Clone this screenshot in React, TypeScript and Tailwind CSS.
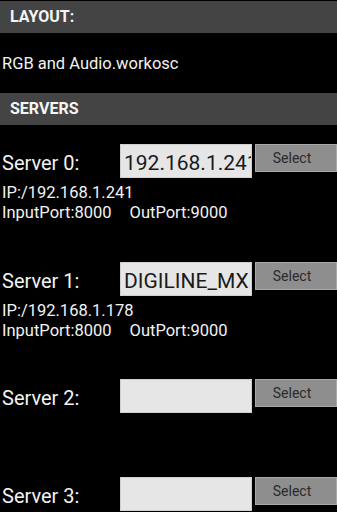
import React from "react";

const font = { fontFamily: "Roboto, 'Noto Sans', sans-serif" };

function Row({ label, value, info, gapAfter }: { label: string; value: string; info?: [string, string, string]; gapAfter: string }) {
  return (
    <div className={gapAfter}>
      <div className="flex items-start">
        <div className="w-[120px] h-[34px] flex items-center pl-[2px] pt-[4px] text-[20px] leading-[24px] text-[#f2f2f2]">
          {label}
        </div>
        <div className="w-[132px] h-[34px] bg-[#e6e6e6] border border-[#cfcfcf] overflow-hidden whitespace-nowrap flex items-center pl-[3px] pt-[4px] text-[21px] leading-[24px] text-[#1a1a1a]">
          {value}
        </div>
        <div className="ml-[3px] w-[82px] h-[28px] bg-[#8e8e8e] border border-[#a8a8a8] flex items-center justify-center pr-[8px] text-[14px] text-[#2a2a2a]">
          Select
        </div>
      </div>
      {info && (
        <div className="pl-[2px] mt-[5px] text-[16.5px] leading-[20px] text-[#f2f2f2]">
          <div>{info[0]}</div>
          <div className="flex">
            <span>{info[1]}</span>
            <span className="ml-[18px]">{info[2]}</span>
          </div>
        </div>
      )}
    </div>
  );
}

export default function App() {
  return (
    <div className="w-[337px] h-[512px] bg-black overflow-hidden pt-[1px]" style={font}>
      <div className="h-[32px] bg-[#444444] flex items-center pl-[10px] text-[16px] font-bold text-[#f5f5f5]">
        LAYOUT:
      </div>
      <div className="h-[60px] flex items-center pl-[2px] pt-[2px] text-[16.5px] text-[#f2f2f2]">
        RGB and Audio.workosc
      </div>
      <div className="h-[32px] bg-[#444444] flex items-center pl-[10px] text-[16px] font-bold text-[#f5f5f5]">
        SERVERS
      </div>
      <div className="pt-[19px]">
        <Row label="Server 0:" value="192.168.1.241" info={["IP:/192.168.1.241", "InputPort:8000", "OutPort:9000"]} gapAfter="mb-[39px]" />
        <Row label="Server 1:" value="DIGILINE_MX" info={["IP:/192.168.1.178", "InputPort:8000", "OutPort:9000"]} gapAfter="mb-[38px]" />
        <Row label="Server 2:" value="" gapAfter="mb-[64px]" />
        <Row label="Server 3:" value="" gapAfter="" />
      </div>
    </div>
  );
}
